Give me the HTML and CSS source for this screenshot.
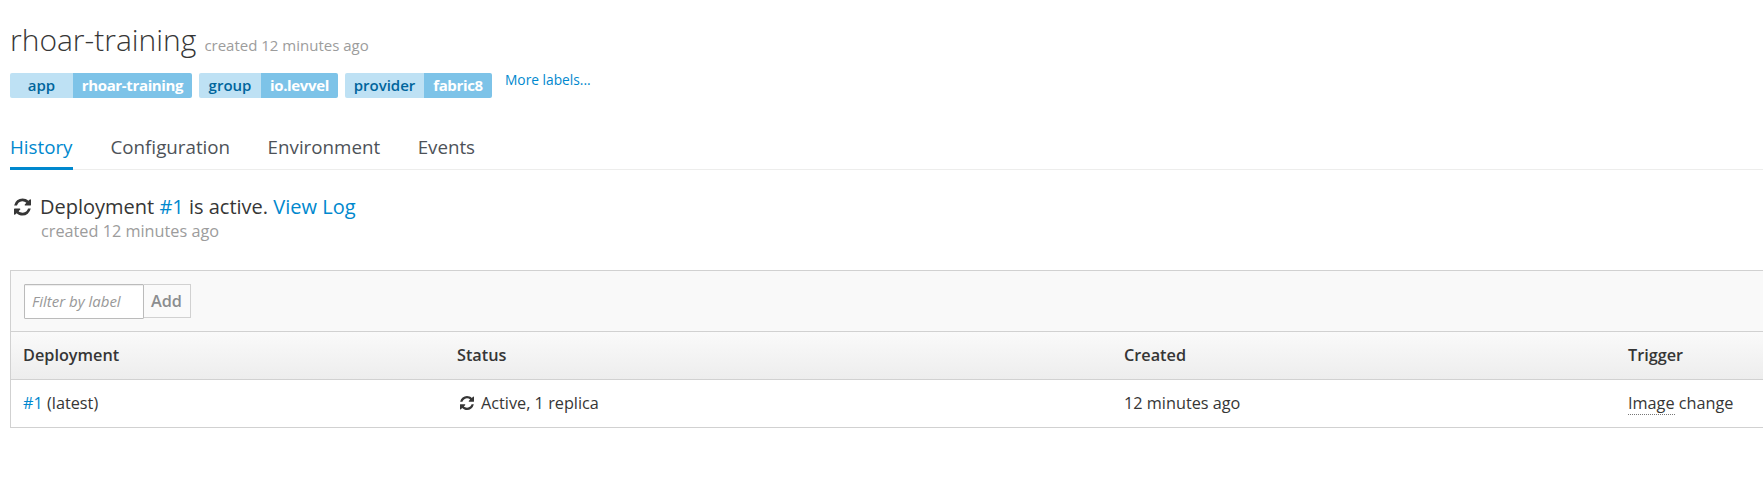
FILE: index.html
```html
<!DOCTYPE html>
<html lang="en">
<head>
<meta charset="utf-8">
<title>rhoar-training</title>
<link rel="stylesheet" href="styles.css">
</head>
<body>
<svg class="sprite" aria-hidden="true">
  <symbol id="refresh" viewBox="0 0 1536 1536"><path d="M1511 928q0 5-1 7-64 268-268 434.500t-478 166.500q-146 0-282.500-55t-243.500-157l-129 129q-19 19-45 19t-45-19-19-45v-448q0-26 19-45t45-19h448q26 0 45 19t19 45-19 45l-137 137q71 66 161 102t187 36q134 0 250-65t186-179q11-17 53-117 8-23 30-23h192q13 0 22.500 9.500t9.500 22.500zm25-800v448q0 26-19 45t-45 19h-448q-26 0-45-19t-19-45 19-45l138-138q-148-137-349-137-134 0-250 65t-186 179q-11 17-53 117-8 23-30 23h-199q-13 0-22.500-9.500t-9.500-22.500v-7q65-268 270-434.500t480-166.500q146 0 284 55.500t245 156.500l130-129q19-19 45-19t45 19 19 45z"/></symbol>
</svg>
<main class="page">
  <h1 class="title"><span class="title-name">rhoar-training</span> <small class="title-meta">created 12 minutes ago</small></h1>
  <div class="labels">
    <span class="label label-app"><span class="label-key">app</span><span class="label-value">rhoar-training</span></span>
    <span class="label label-group"><span class="label-key">group</span><span class="label-value">io.levvel</span></span>
    <span class="label label-provider"><span class="label-key">provider</span><span class="label-value">fabric8</span></span>
    <a class="more">More labels...</a>
  </div>
  <nav class="tabs">
    <a class="tab tab-active">History</a>
    <a class="tab">Configuration</a>
    <a class="tab">Environment</a>
    <a class="tab">Events</a>
  </nav>
  <section class="status">
    <svg class="status-icon"><use href="#refresh"/></svg>
    <div>
      <div class="status-text">Deployment <a>#1</a> is active. <a>View Log</a></div>
      <div class="status-meta">created 12 minutes ago</div>
    </div>
  </section>
  <section class="history">
    <form class="filter">
      <input class="filter-input" type="text" placeholder="Filter by label">
      <button class="filter-add" type="button" disabled>Add</button>
    </form>
    <div class="row row-head"><span>Deployment</span><span>Status</span><span>Created</span><span>Trigger</span></div>
    <div class="row">
      <span><a>#1</a> (latest)</span>
      <span class="active"><svg class="row-icon"><use href="#refresh"/></svg><span>Active, 1 replica</span></span>
      <span>12 minutes ago</span>
      <span><span class="hint">Image</span> change</span>
    </div>
  </section>
</main>
</body>
</html>
```
FILE: styles.css
```css
* { box-sizing: border-box; }
body { margin: 0; background: #fff; color: #363636; font-family: "Open Sans", sans-serif; font-size: 16.25px; overflow: hidden; }
a { color: #0088ce; }
.sprite { display: none; }
.page { padding: 19px 0 0 10px; white-space: nowrap; }
.title { display: flex; align-items: baseline; gap: 8px; height: 54px; margin: 0; font-weight: 300; font-size: 30px; line-height: 41px; }
.title-meta { font-size: 15px; font-weight: 400; color: #9c9c9c; }
.labels { display: flex; gap: 7px; height: 25px; font-size: 15px; line-height: 25px; font-weight: 600; }
.label { display: flex; border-radius: 2px; overflow: hidden; text-align: center; }
.label-key { background: #bee1f4; color: #00659c; }
.label-value { flex: 1; background: #7dc3e8; color: #fff; font-weight: 700; letter-spacing: -0.35px; }
.label-app { width: 182px; }
.label-app .label-key { width: 63px; }
.label-group { width: 139px; }
.label-group .label-key { width: 62px; }
.label-provider { width: 147px; }
.label-provider .label-key { width: 79px; }
.more { margin-left: 6px; font-size: 13.75px; font-weight: 400; line-height: 14px; }
.tabs { display: flex; gap: 37.5px; height: 43px; margin-top: 29px; border-bottom: 1px solid #ededec; font-size: 18.75px; line-height: 40px; color: #4d5258; }
.tab { height: 43px; color: #4d5258; }
.tab-active { width: 63px; color: #0088ce; border-bottom: 3px solid #0088ce; }
.status { display: flex; gap: 8px; height: 100px; padding: 23px 0 0 4px; }
.status-icon { width: 17px; height: 18px; margin-top: 5px; fill: #363636; }
.status-text { margin-left: 1px; font-size: 20px; line-height: 28px; }
.status-meta { margin-left: 2px; font-size: 16.25px; line-height: 20px; color: #9c9c9c; }
.history { width: 1800px; border: 1px solid #d1d1d1; }
.filter { display: flex; height: 60px; padding: 13px; background: #f9f9f9; }
.filter-input { width: 120px; height: 35px; padding: 0 7px 1px; border: 1px solid #bbb; border-radius: 1px; background: #fff; box-shadow: inset 0 1px 1px rgba(3,3,3,.075); font: 15px "Open Sans", sans-serif; }
.filter-input::placeholder { color: #999; font-style: italic; opacity: 1; }
.filter-add { width: 47px; height: 34px; padding: 0 1px 0 0; border: 1px solid #d1d1d1; border-left: 0; background: #fafafa; color: #8b8d8f; font: 600 16.25px "Open Sans", sans-serif; }
.row { display: grid; grid-template-columns: 434px 667px 504px 1fr; align-items: center; height: 48px; padding: 0 0 2px 12px; border-top: 1px solid #d1d1d1; }
.row-head { background: linear-gradient(#fafafa, #ededed); font-weight: 600; }
.active { display: flex; align-items: center; gap: 7px; padding-left: 3px; }
.row-icon { width: 14px; height: 14px; fill: #363636; }
.hint { border-bottom: 1px dotted #777; }
```
